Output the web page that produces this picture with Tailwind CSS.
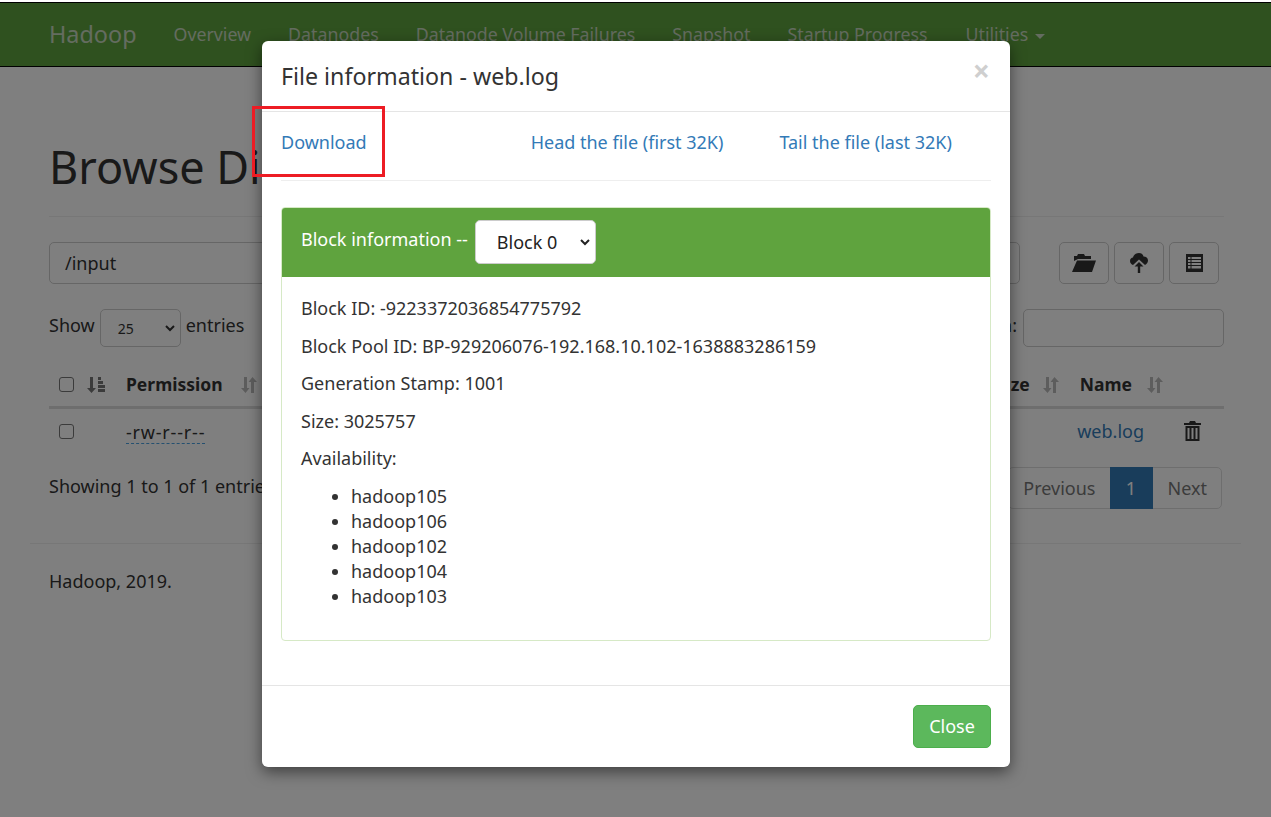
<!DOCTYPE html>
<html lang="en">
<head>
<meta charset="UTF-8" />
<title>Browsing HDFS</title>
<script src="https://cdn.jsdelivr.net/npm/@tailwindcss/browser@4"></script>
</head>
<body class="relative h-[817px] overflow-hidden bg-white font-['Noto_Sans',sans-serif] text-[18px] text-[#333]">
  <!-- page behind the modal -->
  <nav class="mt-[2px] flex h-[65px] items-center gap-[37px] border-y border-black bg-[#5fa33e] pl-[49px] text-[17.8px] text-[#c8d8c0]">
    <span class="text-[23.4px]">Hadoop</span>
    <span>Overview</span>
    <span>Datanodes</span>
    <span>Datanode Volume Failures</span>
    <span>Snapshot</span>
    <span>Startup Progress</span>
    <span class="ml-[1px] flex items-center gap-[7px]">Utilities <i class="mt-[3px] border-x-[5px] border-t-[5px] border-x-transparent border-t-[#c8d8c0]"></i></span>
  </nav>

  <main class="pl-[49px] pr-[47px]">
    <h1 class="mt-[70px] border-b border-[#eee] pb-[19px] text-[45px] leading-[60px]">Browse Directory</h1>
    <div class="mt-[25px] flex items-center">
      <div class="flex h-[42px] w-[971px] items-center rounded-[5px] border border-[#ccc] px-[15px]">/input</div>
      <div class="ml-[39px] flex gap-[5px]">
        <button class="flex h-[42px] w-[50px] items-center justify-center rounded-[5px] border border-[#ccc]">
          <svg class="h-[18px] w-[24px]" viewBox="0 0 24 18"><path fill="#333" d="M2 7V2h3l1-2h6l1 2h6v3H6zM5 6.500h19L20 18H0z"/></svg>
        </button>
        <button class="flex h-[42px] w-[50px] items-center justify-center rounded-[5px] border border-[#ccc]">
          <svg class="h-[20px] w-[18px]" viewBox="0 0 18 20"><path fill="#333" d="M9 0c2.500 0 4 1.500 4.500 3.500 2.500 0 4.500 1.500 4.500 4 0 2-1.500 3.500-3 4.500L9 6.500 3 12C1.500 11.500 0 10 0 8c0-2 1.500-3.500 3-3.500C3.500 2 6 0 9 0zM9 9l4.500 4.500H10.200V20H7.800v-6.500H4.500z"/></svg>
        </button>
        <button class="flex h-[42px] w-[50px] items-center justify-center rounded-[5px] border border-[#ccc]">
          <svg class="h-[18px] w-[17px]" viewBox="0 0 17 18"><path fill="#333" fill-rule="evenodd" d="M0 0h17v18H0zM2 3v2h2.500V3zM5.500 3v2H15V3zM2 6v2h2.500V6zM5.500 6v2H15V6zM2 9v2h2.500V9zM5.500 9v2H15V9zM2 12v2.500h2.500V12zM5.500 12v2.500H15V12z"/></svg>
        </button>
      </div>
    </div>

    <div class="mt-[25px] flex h-[38px] items-center justify-between">
      <div class="flex items-center gap-[5px]">
        <span class="mb-[6px]">Show</span>
        <div class="flex h-[38px] w-[81px] items-center justify-between rounded-[5px] border border-[#ccc] pl-[17px] pr-[5px] text-[14px]">
          <span class="mt-[1px]">25</span>
          <svg class="h-[8px] w-[10px]" viewBox="0 0 10 8"><path d="M1 2l4 4 4-4" fill="none" stroke="#333" stroke-width="2"/></svg>
        </div>
        <span class="mb-[6px]">entries</span>
      </div>
      <div class="flex items-center gap-[6px]">
        <span class="mb-[6px]">Search:</span>
        <div class="h-[38px] w-[201px] rounded-[5px] border border-[#ccc]"></div>
      </div>
    </div>

    <div class="mt-[21px] flex h-[41px] items-center border-b-[3px] border-[#ddd] pb-[5px] text-[17.500px] font-bold">
      <i class="ml-[10px] h-[15px] w-[15px] rounded-[3px] border border-[#767676]"></i>
      <svg class="ml-[13px] h-[16px] w-[18px]" viewBox="0 0 18 16"><path fill="#777" d="M3 0h3v11h3l-4.500 5L0 11h3zM11 0h3v3h-3zM11 4h5v3h-5zM11 8h7v3h-7zM11 12h7v3h-7z"/></svg>
      <span class="ml-[21px]">Permission</span>
      <svg class="ml-[18px] h-[16px] w-[16px]" viewBox="0 0 16 16"><path fill="#bbb" d="M3 0h3v11h2.500L4.500 16 0 11h3zM10 5h3v11h-3zM7.500 5L11.500 0 16 5z"/></svg>
      <span class="ml-auto">Size</span>
      <svg class="ml-[13px] h-[16px] w-[16px]" viewBox="0 0 16 16"><path fill="#bbb" d="M3 0h3v11h2.500L4.500 16 0 11h3zM10 5h3v11h-3zM7.500 5L11.500 0 16 5z"/></svg>
      <span class="ml-[21px]">Name</span>
      <svg class="ml-[15px] mr-[61px] h-[16px] w-[16px]" viewBox="0 0 16 16"><path fill="#bbb" d="M3 0h3v11h2.500L4.500 16 0 11h3zM10 5h3v11h-3zM7.500 5L11.500 0 16 5z"/></svg>
    </div>
    <div class="flex h-[45px] items-center">
      <i class="ml-[10px] h-[15px] w-[15px] rounded-[3px] border border-[#767676]"></i>
      <span class="ml-[52px] mt-[2px] border-b border-dashed border-[#4aa0e0] leading-[22px] tracking-[0.8px]">-rw-r--r--</span>
      <a class="ml-auto text-[#337ab7]">web.log</a>
      <svg class="mb-[2px] ml-[40px] mr-[23px] h-[20px] w-[17px]" viewBox="0 0 17 20"><path fill="#333" fill-rule="evenodd" d="M6 0h5l1 2h5v2H0V2h5zM1.500 5h14v15h-14zM3.500 7v11h2V7zM7.500 7v11h2V7zM11.500 7v11h2V7z"/></svg>
    </div>
    <div class="mt-[13px] flex h-[42px] items-center justify-between">
      <span class="mb-[4px]">Showing 1 to 1 of 1 entries</span>
      <div class="mr-[2px] flex h-[42px] items-center rounded-[5px] border border-[#ddd] text-[#777]">
        <span class="px-[14px]">Previous</span>
        <span class="flex h-[42px] w-[43px] items-center justify-center bg-[#337ab7] text-white">1</span>
        <span class="pl-[15px] pr-[14px]">Next</span>
      </div>
    </div>
  </main>
  <footer class="mx-[30px] mt-[34px] border-t border-[#eee] px-[19px] pt-[24px]">Hadoop, 2019.</footer>

  <!-- backdrop -->
  <div class="absolute inset-x-0 bottom-0 top-[2px] bg-black/50"></div>

  <!-- file information modal -->
  <div class="absolute left-[262px] top-[41px] flex h-[726px] w-[748px] flex-col rounded-[6px] bg-white shadow-[0_5px_15px_rgba(0,0,0,0.5)]">
    <div class="flex h-[71px] items-center justify-between border-b border-[#e5e5e5] pl-[19px] pr-[20px]">
      <h4 class="text-[23.200px]">File information - web.log</h4>
      <span class="mb-[10px] text-[30px] font-bold leading-none text-[#cfcfcf]">×</span>
    </div>
    <div class="px-[19px]">
      <div class="flex h-[69px] items-center border-b border-[#eee] pb-[7px] text-[#337ab7]">
        <a>Download</a>
        <a class="ml-[164px]">Head the file (first 32K)</a>
        <a class="ml-[56px]">Tail the file (last 32K)</a>
      </div>
      <div class="mt-[26px] h-[434px] rounded-[4px] border border-[#d6e9c6]">
        <div class="flex h-[69px] items-center rounded-t-[3px] bg-[#5fa33e] px-[19px] text-white">
          <span class="mb-[6px]">Block information --</span>
          <div class="mb-[2px] ml-[7px] flex h-[44px] w-[121px] items-center justify-between rounded-[5px] border border-[#ccc] bg-white pl-[21px] pr-[4px] text-[#222]">
            <span class="mt-[1px]">Block 0</span>
            <svg class="h-[8px] w-[12px]" viewBox="0 0 10 8"><path d="M1 2l4 4 4-4" fill="none" stroke="#222" stroke-width="2"/></svg>
          </div>
        </div>
        <div class="px-[19px] pt-[19px]">
          <p class="h-[37.500px] leading-[25px]">Block ID: -9223372036854775792</p>
          <p class="h-[37.500px] leading-[25px]">Block Pool ID: BP-929206076-192.168.10.102-1638883286159</p>
          <p class="h-[37.500px] leading-[25px]">Generation Stamp: 1001</p>
          <p class="h-[37.500px] leading-[25px]">Size: 3025757</p>
          <p class="h-[37.500px] leading-[25px]">Availability:</p>
          <ul class="list-disc pl-[50px] leading-[25px]">
            <li>hadoop105</li>
            <li>hadoop106</li>
            <li>hadoop102</li>
            <li>hadoop104</li>
            <li>hadoop103</li>
          </ul>
        </div>
      </div>
    </div>
    <div class="mt-[44px] flex h-[82px] items-center justify-end border-t border-[#e5e5e5] pr-[19px]">
      <button class="h-[43px] w-[78px] rounded-[5px] border border-[#4cae4c] bg-[#5cb85c] text-white">Close</button>
    </div>
  </div>

  <!-- red annotation box drawn over the screenshot -->
  <div class="absolute left-[252px] top-[106px] h-[71px] w-[133px] border-[3px] border-[#ed1c24]"></div>
</body>
</html>
